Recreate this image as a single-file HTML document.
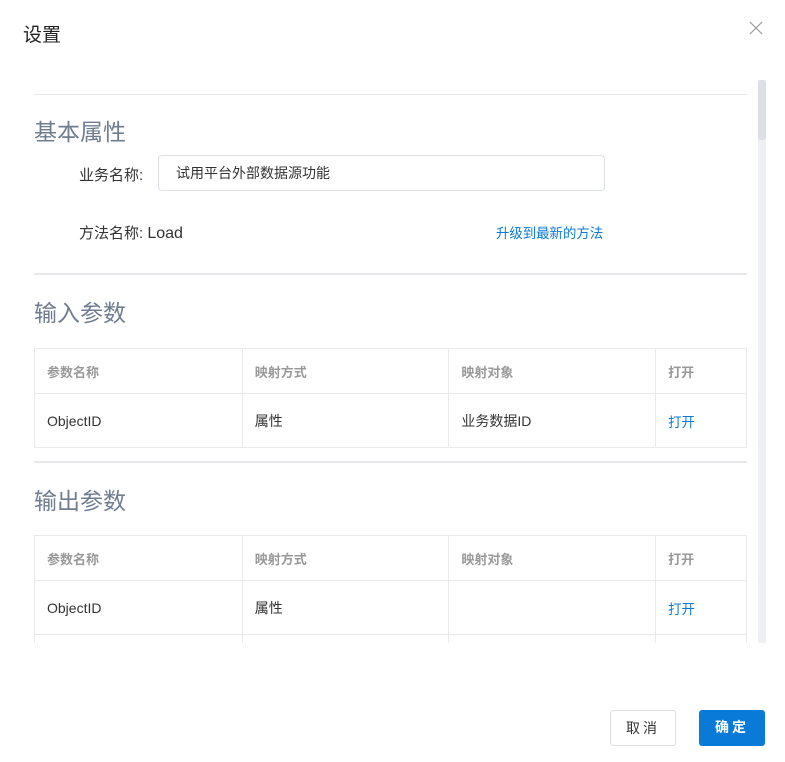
<!DOCTYPE html>
<html><head><meta charset="utf-8"><style>
*{margin:0;padding:0;box-sizing:border-box}
body{width:785px;height:762px;background:#fff;font-family:"Liberation Sans","Noto Sans CJK SC",sans-serif;position:relative;overflow:hidden;color:#333}
.abs{position:absolute}
.title{left:23px;top:20px;font-size:19px;color:#222}
.close{left:748px;top:20px;width:16px;height:16px}
.hr{left:34px;width:713px;height:2px;background:#e6e8eb}
.h{left:34px;font-size:23px;color:#6f7d8f}
.lbl{font-size:15px;color:#333}
.inp{left:158px;top:155px;width:447px;height:36px;border:1px solid #dcdfe6;border-radius:4px;font-size:14px;padding:7px 17px;color:#333}
.link{color:#0a7ad8;font-size:13.4px}
table{position:absolute;left:34px;width:713px;border-collapse:collapse;font-size:14px}
td{border:1px solid #e8eaee;padding:0 12px;vertical-align:middle}
tr.hd td{height:45px;color:#999;font-weight:bold;font-size:13px}
tr.bd td{height:54px;color:#333}
tr.bd td.lk{color:#0a7ad8;font-size:13.4px}
.sb{left:758px;top:80px;width:8px;height:563px;background:#eef0f4}
.thumb{left:758px;top:80px;width:8px;height:60px;background:#dcdfe5;border-radius:3px}
.btn{top:710px;height:36px;border-radius:3px;font-size:14px;text-align:center;line-height:34px;letter-spacing:3px}
</style></head><body>
<div class="abs title">设置</div>
<svg class="abs close" viewBox="0 0 16 16"><path d="M2 2L14 14M14 2L2 14" stroke="#999" stroke-width="1.2"/></svg>
<div class="abs sb"></div><div class="abs thumb"></div>
<div style="position:absolute;left:0;top:80px;width:757px;height:563px;overflow:hidden">
<div style="position:absolute;left:0;top:-80px;width:757px;height:800px">
<div class="abs hr" style="top:94px;height:1px"></div>
<div class="abs h" style="top:113px">基本属性</div>
<div class="abs lbl" style="left:79px;top:164px">业务名称:</div>
<div class="abs inp">试用平台外部数据源功能</div>
<div class="abs lbl" style="left:79px;top:222px">方法名称:&nbsp;<span style="font-size:16px">Load</span></div>
<div class="abs link" style="left:496px;top:222px">升级到最新的方法</div>
<div class="abs hr" style="top:273px"></div>
<div class="abs h" style="top:294px">输入参数</div>
<table style="top:348px">
<colgroup><col style="width:208px"><col style="width:207px"><col style="width:207px"><col style="width:91px"></colgroup>
<tr class="hd"><td>参数名称</td><td>映射方式</td><td>映射对象</td><td>打开</td></tr>
<tr class="bd"><td>ObjectID</td><td>属性</td><td>业务数据ID</td><td class="lk">打开</td></tr>
</table>
<div class="abs hr" style="top:461px"></div>
<div class="abs h" style="top:482px">输出参数</div>
<table style="top:535px">
<colgroup><col style="width:208px"><col style="width:207px"><col style="width:207px"><col style="width:91px"></colgroup>
<tr class="hd"><td>参数名称</td><td>映射方式</td><td>映射对象</td><td>打开</td></tr>
<tr class="bd"><td>ObjectID</td><td>属性</td><td></td><td class="lk">打开</td></tr>
<tr class="bd"><td></td><td></td><td></td><td></td></tr>
</table>
</div></div>
<div class="abs btn" style="left:610px;width:66px;border:1px solid #dcdfe6;color:#333">取消</div>
<div class="abs btn" style="left:699px;width:66px;background:#0a7ad8;color:#fff;font-weight:bold">确定</div>
</body></html>
